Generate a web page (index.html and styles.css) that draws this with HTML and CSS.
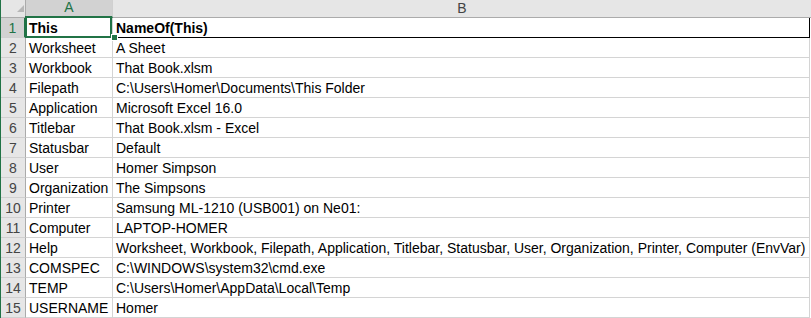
FILE: index.html
```html
<!DOCTYPE html>
<html>
<head>
<meta charset="utf-8">
<link rel="stylesheet" href="styles.css">
</head>
<body>
<div class="sheet">
  <div class="edge"></div>
  <div class="grid">
    <div class="hd corner"><span class="tri"></span></div>
    <div class="hd colhd sel">A</div>
    <div class="hd colhd last">B</div>

    <div class="rh sel">1</div><div class="c a bold selcell">This<span class="selbox"></span><span class="handle"></span></div><div class="c b bold boxed">NameOf(This)</div>
    <div class="rh">2</div><div class="c a">Worksheet</div><div class="c b">A Sheet</div>
    <div class="rh">3</div><div class="c a">Workbook</div><div class="c b">That Book.xlsm</div>
    <div class="rh">4</div><div class="c a">Filepath</div><div class="c b">C:\Users\Homer\Documents\This Folder</div>
    <div class="rh">5</div><div class="c a">Application</div><div class="c b">Microsoft Excel 16.0</div>
    <div class="rh">6</div><div class="c a">Titlebar</div><div class="c b">That Book.xlsm - Excel</div>
    <div class="rh">7</div><div class="c a">Statusbar</div><div class="c b">Default</div>
    <div class="rh">8</div><div class="c a">User</div><div class="c b">Homer Simpson</div>
    <div class="rh">9</div><div class="c a">Organization</div><div class="c b">The Simpsons</div>
    <div class="rh">10</div><div class="c a">Printer</div><div class="c b">Samsung ML-1210 (USB001) on Ne01:</div>
    <div class="rh">11</div><div class="c a">Computer</div><div class="c b">LAPTOP-HOMER</div>
    <div class="rh">12</div><div class="c a">Help</div><div class="c b">Worksheet, Workbook, Filepath, Application, Titlebar, Statusbar, User, Organization, Printer, Computer (EnvVar)</div>
    <div class="rh">13</div><div class="c a">COMSPEC</div><div class="c b">C:\WINDOWS\system32\cmd.exe</div>
    <div class="rh">14</div><div class="c a">TEMP</div><div class="c b">C:\Users\Homer\AppData\Local\Temp</div>
    <div class="rh">15</div><div class="c a">USERNAME</div><div class="c b">Homer</div>
  </div>
</div>
</body>
</html>
```

FILE: styles.css
```css
html, body {
  margin: 0;
  padding: 0;
  background: #ffffff;
}
body {
  font-family: "Liberation Sans", Arial, sans-serif;
  font-size: 14px;
  color: #000000;
  overflow: hidden;
}
.sheet {
  display: flex;
  width: 811px;
  height: 318px;
}
.edge {
  width: 1px;
  background: #217346;
  flex: none;
}
.grid {
  flex: 1;
  display: grid;
  grid-template-columns: 25px 87px 697px 1px;
  grid-template-rows: 18px repeat(15, 20px);
}
.grid > .c.b { grid-column: 3; }
.hd, .rh, .c {
  box-sizing: border-box;
  white-space: nowrap;
}
.hd {
  background: #e6e6e6;
  border-bottom: 1px solid #ababab;
  border-right: 1px solid #d0d0d0;
  color: #444444;
  text-align: center;
  line-height: 16px;
  font-size: 14px;
}
.hd.last {
  grid-column: 3 / span 2;
  border-right: none;
}
.corner {
  position: relative;
  border-right: 1px solid #ababab;
}
.tri {
  position: absolute;
  right: 1px;
  bottom: 5px;
  width: 0;
  height: 0;
  border-left: 7px solid transparent;
  border-bottom: 7px solid #b7b7b7;
}
.hd.sel {
  background: #d2d2d2;
  color: #217346;
  border-bottom: 2px solid #217346;
  line-height: 15px;
}
.rh {
  grid-column: 1;
  background: #e6e6e6;
  border-right: 1px solid #ababab;
  border-bottom: 1px solid #d0d0d0;
  color: #444444;
  text-align: center;
  line-height: 19px;
  padding-top: 1px;
}
.rh.sel {
  background: #d2d2d2;
  color: #217346;
  border-right: 2px solid #217346;
}
.c {
  border-right: 1px solid #d4d4d4;
  border-bottom: 1px solid #d4d4d4;
  line-height: 19px;
  padding: 1px 0 0 3px;
}
.bold { font-weight: bold; }
.boxed {
  border-bottom-color: #000000;
  border-right-color: #000000;
}
.selcell {
  position: relative;
}
.selbox {
  position: absolute;
  left: -1px;
  top: -2px;
  right: 0;
  bottom: -1px;
  border: 2px solid #217346;
  pointer-events: none;
}
.handle {
  position: absolute;
  left: 85px;
  top: 16px;
  width: 5px;
  height: 5px;
  background: #217346;
  border: 1px solid #ffffff;
}
```
